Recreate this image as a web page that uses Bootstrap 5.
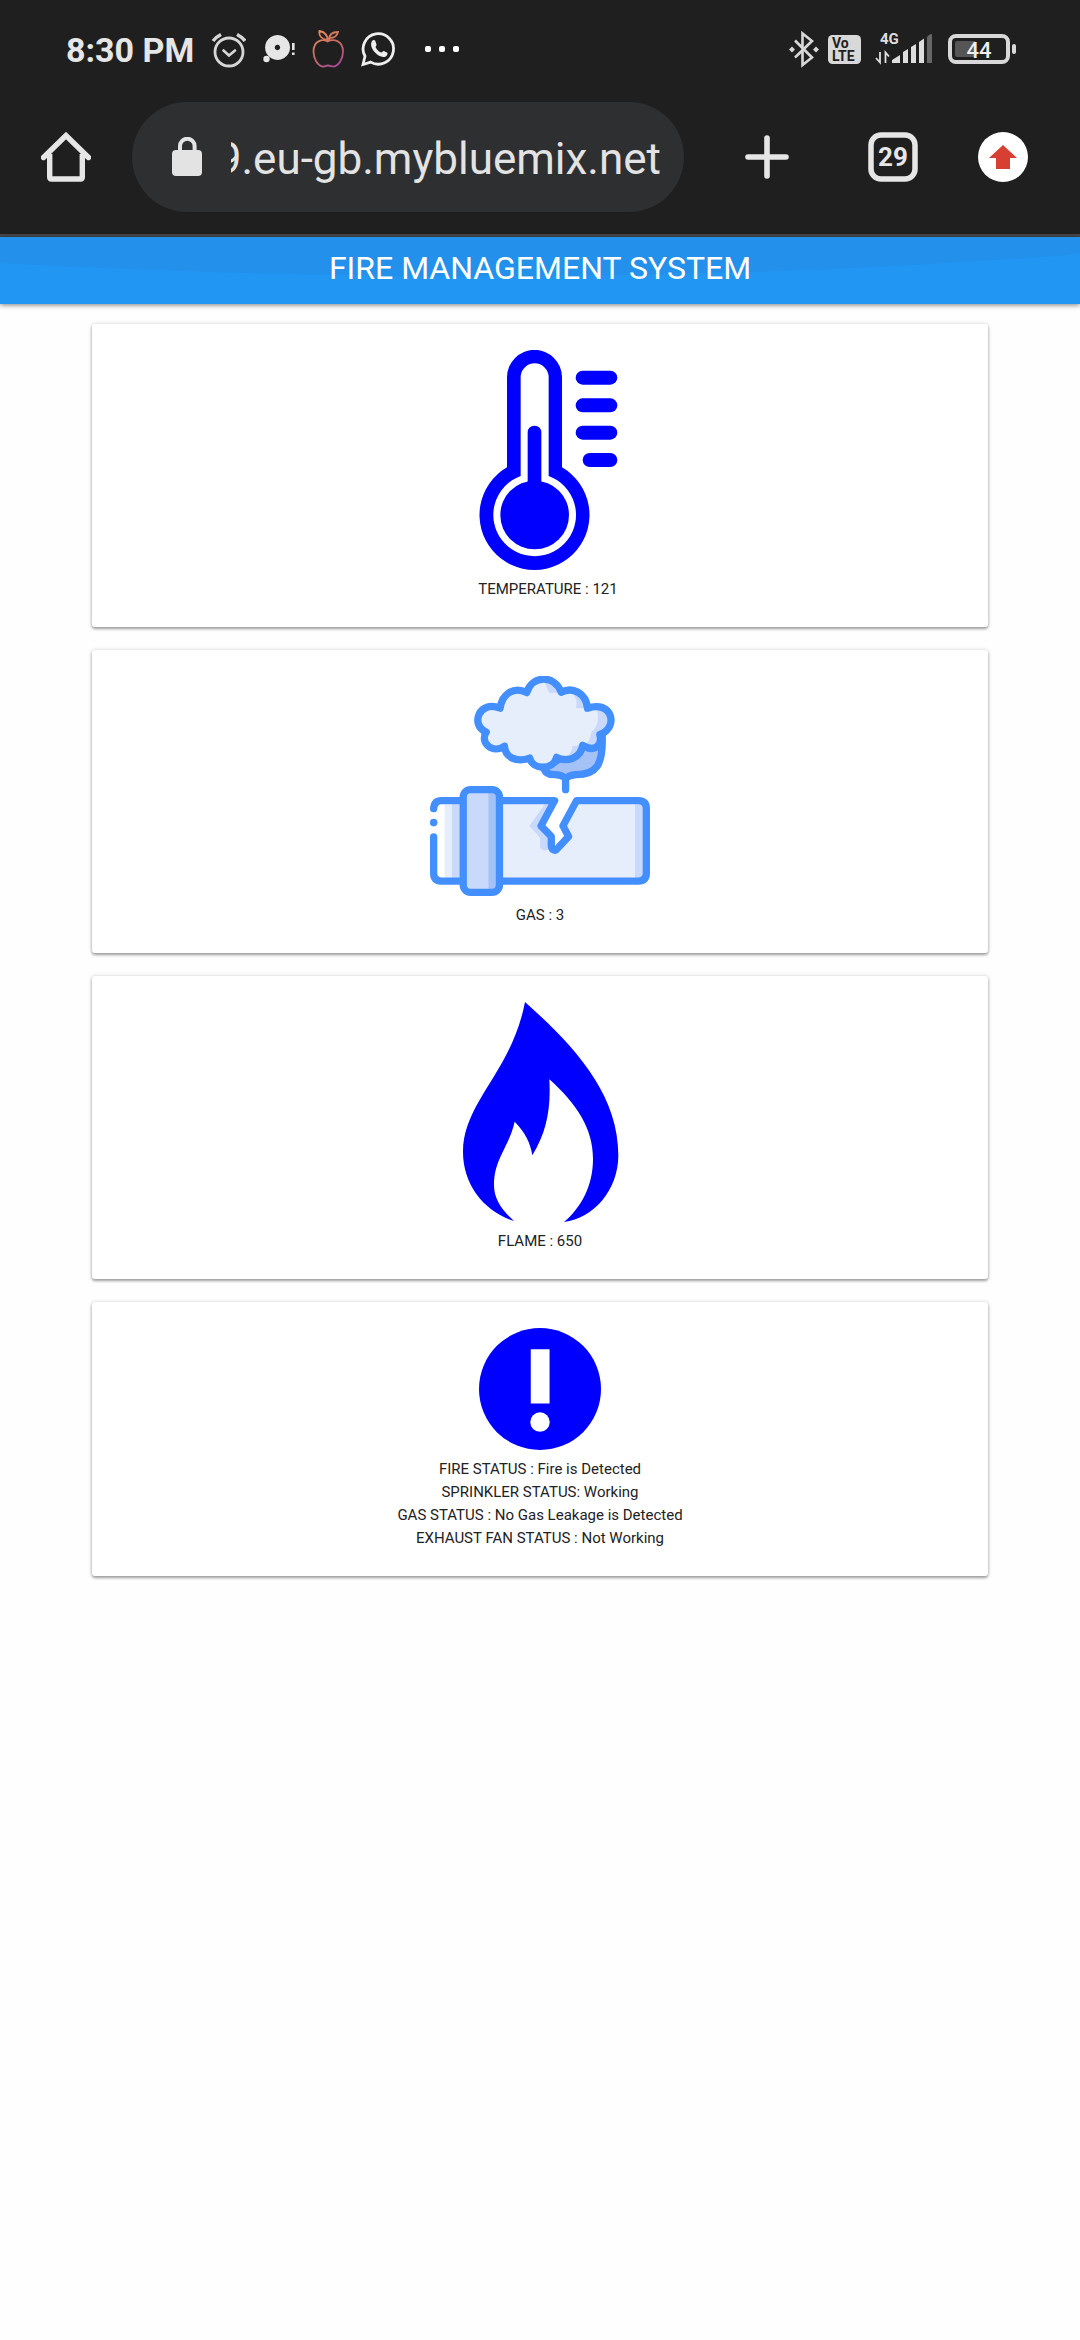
<!DOCTYPE html>
<html lang="en">
<head>
<meta charset="utf-8">
<meta name="viewport" content="width=device-width, initial-scale=1">
<title>Fire Management System</title>
<link href="https://cdn.jsdelivr.net/npm/bootstrap@5.3.0/dist/css/bootstrap.min.css" rel="stylesheet">
<style>
  body { font-family: Roboto, "Open Sans", sans-serif; background: #fefefe; color: #222; }
  svg { display: block; flex: none; }
  .chrome-top { background: #1f1f1f; color: #e6e6e6; border-bottom: 3px solid #474849; }
  .status-bar { height: 100px; padding: 0 64px 0 66px; }
  .clock { font-size: 34px; font-weight: 700; line-height: 40px; }
  .status-left { gap: 17px; }
  .status-right { gap: 9px; }
  .more-dots { margin-left: 13px; }
  .tool-row { padding: 2px 52px 22px 41px; }
  .tool-row .btn { color: #e6e6e6; border: 0; border-radius: 0; padding: 0; }
  .omnibox { height: 110px; background: #2e2f31; margin: 0 61px 0 41px; padding: 0 23px 0 40px; }
  .omnibox-url { direction: rtl; text-align: right; margin-left: 29px; color: #e3e3e3; font-size: 44px; line-height: 64px; outline: 0; }
  .tab-btn { margin: 0 60px 0 79px; }
  .title-bar { height: 67px; padding-bottom: 5px; background: #2196f3; box-shadow: 0 1px 5px rgba(0,0,0,.5); }
  .title-bar h1 { font-size: 32px; line-height: 40px; font-weight: 400; color: #fff; }
  .title-wave { position: absolute; inset: 0; width: 100%; height: 100%; }
  .sensor-list { width: 83%; padding: 20px 0; gap: 23px; }
  .sensor { border: 0; border-radius: 3px; background: #fff; padding: 26px; box-shadow: 0 2px 3px rgba(0,0,0,.34), 0 0 4px rgba(0,0,0,.16); }
  .sensor svg { margin-bottom: 8px; }
  .sensor p { margin: 0; font-size: 15px; line-height: 23px; }
</style>
</head>
<body>
<header class="chrome-top">
  <div class="status-bar d-flex justify-content-between align-items-center">
    <div class="status-left d-flex align-items-center">
      <span class="clock">8:30 PM</span>
      <svg width="35" height="40" viewBox="211 32 35 40" fill="none" stroke="#d6d6d6" stroke-linecap="round" role="img" aria-label="Alarm"><circle cx="229" cy="54" r="14" stroke-width="2.800"/><path d="M223.500 52.500l5.500 5 6-5" stroke-width="2.600"/><path d="M213 43q3-4 8-6.500M245 43q-3-4-8-6.500" stroke-width="3.600" stroke-linecap="butt"/></svg>
      <svg width="32" height="40" viewBox="263 32 32 40" fill="#e6e6e6" role="img" aria-label="Messages"><path fill-rule="evenodd" d="M277.500 37a12.500 12.500 0 1 0 .1 0zM277.500 46.800a2.700 2.700 0 1 1-.1 0z"/><circle cx="266.500" cy="61" r="3.200"/><path d="M292 45h2.600v7H292zM292 54.500h2.600v2.600H292z"/></svg>
      <svg width="32" height="40" viewBox="313 32 32 40" fill="none" stroke="url(#appleInk)" stroke-width="1.800" role="img" aria-label="Apple"><defs><linearGradient id="appleInk" gradientUnits="userSpaceOnUse" x1="318" y1="34" x2="340" y2="68"><stop offset="0" stop-color="#e58a5c"/><stop offset=".5" stop-color="#c4695f"/><stop offset="1" stop-color="#a84a9b"/></linearGradient></defs><path d="M328.500 43.500c-4-2.500-14-2-14 10 0 7 4 14 9 15 2 .3 3-1 5.500-1s4 1.300 6 1c5-1 9-8 9-15 0-12-10-12.500-15.500-10zM329 44c0-6-3-10-8.500-11-1 5 2 8 8 9M330 42c0-5 3-8 9-8-1 4-4 6-8 6"/></svg>
      <svg width="34" height="40" viewBox="362 32 34 40" fill="none" stroke="#eee" role="img" aria-label="WhatsApp"><path d="M364 66.500l2-8.200a15.200 15.200 0 1 1 5.700 5.800z" stroke-width="2.800"/><path d="M373 43c1.500-1.500 3-1 3.500.5l1 3c.4 1-1.200 2-.9 2.800 1.200 2.500 3.200 4.400 5.700 5.200 1 .2 1.500-1.700 2.500-1.400l3.200 1.500c1.200.6.400 3-1.200 3.800-3.500 1.500-7.500-.4-10.500-3.600-3.300-3.500-5.500-8-3.300-11.800z" fill="#eee" stroke="none"/></svg>
      <svg class="more-dots" width="34" height="40" viewBox="426 32 34 40" fill="#fff" role="img" aria-label="More notifications"><rect x="426" y="48" width="6" height="6" rx="2"/><rect x="440" y="48" width="6" height="6" rx="2"/><rect x="454" y="48" width="6" height="6" rx="2"/></svg>
    </div>
    <div class="status-right d-flex align-items-center">
      <svg width="30" height="40" viewBox="789 30 30 40" fill="none" stroke="#d8d8d8" stroke-width="2.600" role="img" aria-label="Bluetooth"><path d="M795 40.500l17 17-9.500 7.500V33.500l9.500 7.500-17 16.500"/><path d="M789 49.500l3-3 3 3-3 3zM813 49.500l3-3 3 3-3 3z" fill="#d8d8d8" stroke="none"/></svg>
      <svg width="33" height="40" viewBox="828 30 33 40" role="img" aria-label="VoLTE"><rect x="828" y="35" width="33" height="29" rx="4.500" fill="#d8d8d8"/><g fill="#1f1f1f" font-size="14" font-weight="700"><text x="832" y="47.500">Vo</text><text x="832" y="61">LTE</text></g></svg>
      <svg width="62" height="40" viewBox="870 30 62 40" fill="#dedede" role="img" aria-label="Mobile signal"><text x="880" y="44" font-size="15" font-weight="700">4G</text><path d="M892 63v-3l8-5v8zM903 63V52l5-3v14zM911 63V47l5-3v19zM919 63V42l5-3.500V63z"/><path d="M927 63V37q2-3 5-3v29z" fill="#666"/><path d="M880 52v10.500l-4-4.500M885.500 63V52.500l3.500 4" fill="none" stroke="#dedede" stroke-width="1.800"/></svg>
      <svg width="75" height="40" viewBox="941 30 75 40" role="img" aria-label="Battery 44"><rect x="950" y="36" width="58" height="26" rx="6" fill="none" stroke="#d8d8d8" stroke-width="4"/><rect x="955" y="41" width="21" height="16" rx="2" fill="#555"/><rect x="1012" y="44" width="4" height="10" rx="2" fill="#d8d8d8"/><text x="979" y="58" text-anchor="middle" font-size="22" font-weight="500" fill="#eee">44</text></svg>
    </div>
  </div>
  <div class="tool-row d-flex align-items-center">
    <button class="btn" type="button" aria-label="Home"><svg width="50" height="50" viewBox="0 0 50 50" fill="none" stroke="currentColor" stroke-width="5.400" stroke-linejoin="round"><path d="M2.500 25.500L25 3.500l22.500 22" stroke-linecap="round" stroke-linejoin="miter"/><path d="M8.700 22v23q0 2 2 2h28.600q2 0 2-2V22"/></svg></button>
    <div class="omnibox d-flex align-items-center flex-grow-1 rounded-pill">
      <svg width="30" height="40" viewBox="172 141 30 40" fill="#e3e3e3" aria-hidden="true"><rect x="172" y="154" width="30" height="26" rx="4"/><path d="M180 157v-7a7.300 7.300 0 0 1 14.600 0v7" fill="none" stroke="#e3e3e3" stroke-width="4"/></svg>
      <input class="omnibox-url w-100 bg-transparent border-0 p-0 pt-1" type="text" aria-label="Address" value="&lrm;9.eu-gb.mybluemix.net">
    </div>
    <button class="btn" type="button" aria-label="New tab"><svg width="44" height="46" viewBox="0 0 44 46" stroke="currentColor" stroke-width="5.600" stroke-linecap="round"><path d="M22 4v38M3 23h38"/></svg></button>
    <button class="btn tab-btn" type="button" aria-label="Open tabs"><svg width="50" height="50" viewBox="0 0 50 50"><rect x="3" y="3" width="44" height="44" rx="10" fill="none" stroke="currentColor" stroke-width="5.500"/><text x="25" y="34" text-anchor="middle" font-size="26" font-weight="700" fill="currentColor">29</text></svg></button>
    <button class="btn" type="button" aria-label="Update available"><svg width="50" height="50" viewBox="0 0 50 50"><circle cx="25" cy="25" r="25" fill="#fff"/><path d="M25 13L39 26h-7v11H18V26h-7z" fill="#d63f31"/></svg></button>
  </div>
</header>

<main>
  <div class="title-bar position-relative d-flex justify-content-center align-items-center">
    <svg class="title-wave" viewBox="0 0 1080 67" preserveAspectRatio="none" aria-hidden="true"><path d="M0 0H1080V17C720 45 360 45 0 26z" fill="#2390ec"/></svg>
    <h1 class="position-relative m-0">FIRE MANAGEMENT SYSTEM</h1>
  </div>

  <div class="sensor-list d-flex flex-column mx-auto">
    <section class="card sensor align-items-center text-center">
      <svg width="220" height="220" viewBox="-30 90 660 660" fill="#00f" role="img" aria-label="Thermometer">
        <path fill-rule="evenodd" d="M201 172a82.500 82.500 0 0 1 165 0V442a165 165 0 1 1-165 0zM242 172V468a124 124 0 1 0 84 0V172a42 42 0 0 0-84 0z"/>
        <circle cx="284" cy="585" r="103"/><rect x="263" y="317" width="41" height="200" rx="20"/>
        <rect x="407" y="152" width="125" height="42" rx="21"/><rect x="407" y="235" width="125" height="42" rx="21"/><rect x="407" y="317" width="125" height="42" rx="21"/><rect x="428" y="399" width="104" height="42" rx="21"/>
      </svg>
      <p class="ps-3">TEMPERATURE : 121</p>
    </section>

    <section class="card sensor align-items-center text-center">
      <svg width="220" height="220" viewBox="91 79 662 662" fill="none" stroke="#448fff" stroke-width="22" stroke-linecap="round" stroke-linejoin="round" role="img" aria-label="Gas leak">
        <g stroke="none">
          <path d="M310 465H460L428 530 455 565V600H480L510 565 492 530 535 465H741V687H310z" fill="#e6edfb"/>
          <path d="M458 465H530L492 530 508 562 470 603 456 590V562L425 530z" fill="#fff"/>
          <path d="M708 465h34v222h-34zM436 465h26l-36 65 30 35v30q-20 18-34 0v-30l-32-35z" fill="#c9d9fb"/>
          <path d="M135 465h46v222h-46z" fill="#e6edfb"/><path d="M157 465h24v222h-24z" fill="#c9d9fb"/>
        </g>
        <path d="M102 478Q104 454 125 454H185M102 563V672Q102 696 125 696H718Q742 696 742 672V478Q742 454 718 454H532L491 530 508 562 470 603Q456 605 456 590V562L425 530 466 454H310"/>
        <circle cx="102" cy="520" r="11.500" fill="#448fff" stroke="none"/>
        <rect x="191" y="421" width="109" height="309" rx="22" fill="#c9d9fb" stroke="none"/>
        <path d="M267 425h27v300h-27z" fill="#a5c2f7" stroke="none"/>
        <rect x="191" y="421" width="109" height="309" rx="22"/>
        <path d="M609 255C613 350 590 376 530 376Q508 378 499 388Q488 376 465 376Q440 376 434 358L550 285z" fill="#a5c2f7"/>
        <path d="M499 385V421"/>
        <path d="M382 129C400 75 466 75 486 128C520 110 560 130 565 176C640 150 660 235 602 255C612 295 580 307 550 288C545 325 505 340 472 324C462 363 400 363 391 326C350 340 317 324 315 290C280 315 240 280 260 248C210 225 240 150 302 176C308 130 345 110 382 129z" fill="#e6edfb" stroke="none"/>
        <path d="M433 91Q465 100 486 128L450 130zM515 125Q560 130 565 176L530 175Q538 150 515 125zM590 165Q650 190 625 230Q610 245 602 255Q612 295 580 298L550 288Q575 280 575 250Q608 225 590 165zM550 288Q535 330 472 324L510 315Q520 300 520 290z" fill="#c9d9fb" stroke="none"/>
        <path d="M382 129C400 75 466 75 486 128C520 110 560 130 565 176C640 150 660 235 602 255C612 295 580 307 550 288C545 325 505 340 472 324C462 363 400 363 391 326C350 340 317 324 315 290C280 315 240 280 260 248C210 225 240 150 302 176C308 130 345 110 382 129z"/>
      </svg>
      <p>GAS : 3</p>
    </section>

    <section class="card sensor align-items-center text-center">
      <svg width="220" height="220" viewBox="0 100 660 660" fill="#00f" role="img" aria-label="Flame">
        <path d="M285 100C425 225 565 370 565 560C565 665 490 750 402 760C455 715 489 650 489 570C489 480 440 405 358 332C363 420 350 490 307 560C302 525 285 490 254 459C235 540 192 570 192 650C192 690 215 725 252 757C165 730 99 650 99 550C99 400 245 310 285 100z"/>
      </svg>
      <p>FLAME : 650</p>
    </section>

    <section class="card sensor align-items-center text-center">
      <svg width="122" height="122" viewBox="330 90 363 363" role="img" aria-label="Alert">
        <circle cx="511.500" cy="271.500" r="181.500" fill="#00f"/><path d="M484 153h56v162h-56z" fill="#fff"/><circle cx="511.500" cy="370" r="29" fill="#fff"/>
      </svg>
      <p>FIRE STATUS : Fire is Detected</p>
      <p>SPRINKLER STATUS: Working</p>
      <p>GAS STATUS : No Gas Leakage is Detected</p>
      <p>EXHAUST FAN STATUS : Not Working</p>
    </section>
  </div>
</main>
<script src="https://cdn.jsdelivr.net/npm/bootstrap@5.3.0/dist/js/bootstrap.bundle.min.js"></script>
</body>
</html>
